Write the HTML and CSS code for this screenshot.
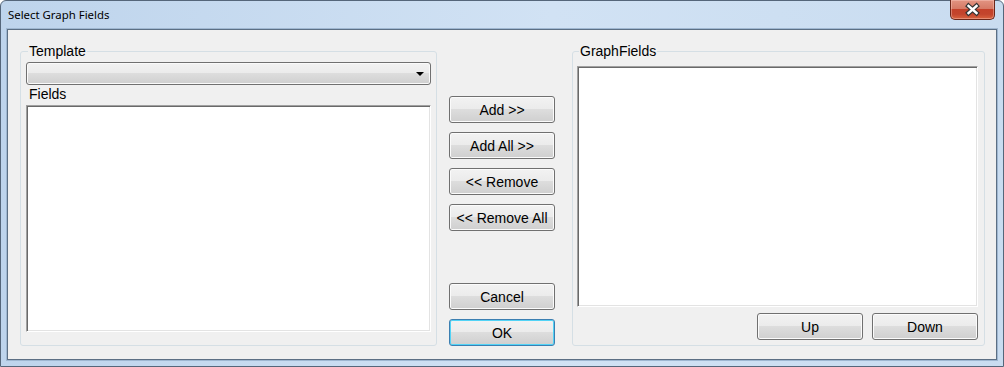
FILE: index.html
```html
<!DOCTYPE html>
<html lang="en">
<head>
  <meta charset="UTF-8">
  <meta name="viewport" content="width=device-width, initial-scale=1.0">
  <title>Select Graph Fields</title>
  <link rel="stylesheet" href="styles.css">
</head>
<body>
  <div class="window">
    <!-- 标题栏 -->
    <div class="titlebar">
      <span class="title">Select Graph Fields</span>
      <button class="close-btn" aria-label="Close">
        <svg width="45" height="20" viewBox="0 0 45 20">
          <g transform="translate(22.5 9.5)">
            <path d="M-4 -3.5 L4 3.5 M4 -3.5 L-4 3.5" stroke="#333" stroke-width="4.8" stroke-linecap="square" fill="none"/>
            <path d="M-4 -3.5 L4 3.5 M4 -3.5 L-4 3.5" stroke="#fff" stroke-width="2.4" stroke-linecap="square" fill="none"/>
          </g>
        </svg>
      </button>
    </div>

    <div class="client">
      <fieldset class="group group-left">
        <legend>Template</legend>
        <div class="combo"><span class="combo-arrow"></span></div>
        <label class="field-label">Fields</label>
        <div class="listbox"></div>
      </fieldset>

      <div class="actions">
        <button class="btn">Add &gt;&gt;</button>
        <button class="btn">Add All &gt;&gt;</button>
        <button class="btn">&lt;&lt; Remove</button>
        <button class="btn">&lt;&lt; Remove All</button>
        <button class="btn btn-cancel">Cancel</button>
        <button class="btn btn-default">OK</button>
      </div>

      <fieldset class="group group-right">
        <legend>GraphFields</legend>
        <div class="listbox"></div>
        <div class="order-buttons">
          <button class="btn">Up</button>
          <button class="btn">Down</button>
        </div>
      </fieldset>
    </div>
  </div>
</body>
</html>
```

FILE: styles.css
```css
html, body {
  margin: 0;
  padding: 0;
  background: #fff;
}

body {
  font-family: "Liberation Sans", Arial, sans-serif;
  font-size: 14px;
  color: #000;
}

/* 窗口外框 */
.window {
  width: 1004px;
  height: 367px;
  box-sizing: border-box;
  border: 1px solid #55667a;
  border-radius: 6px 6px 0 0;
  background: linear-gradient(to right, #bed4ec, #d1e2f4 55%, #c9dcf0);
  display: flex;
  flex-direction: column;
}

.titlebar {
  flex: none;
  height: 28px;
  display: flex;
  align-items: center;
  padding: 0 8px 0 7px;
}

.title {
  font-family: "Noto Sans", "DejaVu Sans", sans-serif;
  font-size: 11.4px;
  line-height: 16px;
  padding-bottom: 1px;
}

.close-btn {
  align-self: flex-start;
  margin: -1px 0 0 auto;
  width: 45px;
  height: 20px;
  padding: 0;
  border: 1px solid #6b2619;
  border-top: none;
  border-radius: 0 0 5px 5px;
  background: linear-gradient(#e29482 0%, #d67a66 45%, #c4412a 50%, #c3452d 75%, #d9633f 100%);
  box-shadow: inset 0 0 0 1px rgba(255, 210, 200, 0.4);
  box-sizing: border-box;
  display: flex;
  align-items: center;
  justify-content: center;
}

.close-btn svg {
  display: block;
  margin: -1px;
}

/* 客户区 */
.client {
  flex: 1;
  margin: 0 6px 6px;
  border: 1px solid #5c6f84;
  box-shadow: 0 0 0 1px #9fb7d1;
  background: #f0f0f0;
  display: flex;
  padding: 14px 11px 13px 12px;
}

.group {
  margin: 0;
  min-width: 0;
  box-sizing: border-box;
  border: 1px solid #d5dfe5;
  border-radius: 3px;
  display: flex;
  flex-direction: column;
}

.group legend {
  margin-left: 2px;
  padding: 0 1px;
  line-height: 15px;
}

.group-left {
  width: 417px;
  padding: 3px 5px 13px;
}

.group-right {
  width: 413px;
  padding: 3px 6px 5px 4px;
}

.group-right .listbox {
  margin-top: 4px;
}

.combo {
  height: 23px;
  box-sizing: border-box;
  border: 1px solid #707070;
  border-radius: 3px;
  background: linear-gradient(#f2f2f2 0%, #ebebeb 50%, #dddddd 50%, #cfcfcf 100%);
  box-shadow: inset 0 0 0 1px #fafafa;
  display: flex;
  align-items: center;
  justify-content: flex-end;
  padding-right: 6px;
}

.combo-arrow {
  width: 0;
  height: 0;
  border-top: 4px solid #000;
  border-left: 4px solid transparent;
  border-right: 4px solid transparent;
  margin-top: 1px;
}

.field-label {
  margin: 2px 0 0 3px;
  line-height: 15px;
}

.listbox {
  flex: 1;
  margin-top: 3px;
  background: #fff;
  border: 1px solid;
  border-color: #a0a0a0 #fff #fff #a0a0a0;
  box-shadow: inset 1px 1px 0 #696969, inset -1px -1px 0 #e3e3e3;
}

/* 中间按钮 */
.actions {
  flex: none;
  width: 106px;
  margin: 0 17px 0 12px;
  padding-top: 52px;
  display: flex;
  flex-direction: column;
  gap: 9px;
}

.btn {
  flex: none;
  width: 106px;
  height: 27px;
  box-sizing: border-box;
  padding: 0;
  border: 1px solid #707070;
  border-radius: 3px;
  background: linear-gradient(#f2f2f2 0%, #ebebeb 50%, #dddddd 50%, #cfcfcf 100%);
  box-shadow: inset 0 0 0 1px #fbfbfb;
  font-family: "Liberation Sans", Arial, sans-serif;
  font-size: 14px;
  color: #000;
}

.btn-cancel {
  margin-top: auto;
}

.btn-default {
  border-color: #3c7fb1;
  box-shadow: inset 0 0 0 1px #52d3f6;
}

.order-buttons {
  margin-top: 6px;
  display: flex;
  justify-content: flex-end;
  gap: 9px;
}
```
